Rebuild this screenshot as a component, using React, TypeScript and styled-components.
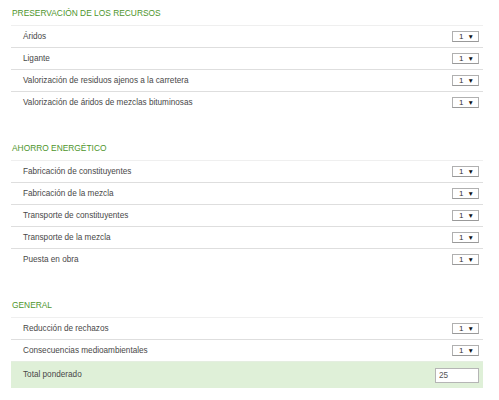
import styled, { createGlobalStyle } from "styled-components";

const GlobalStyle = createGlobalStyle`
  html, body {
    margin: 0;
    padding: 0;
    background: #fff;
  }
  body {
    font-family: "Liberation Sans", Arial, sans-serif;
    color: #444;
  }
`;

interface Criterio {
  nombre: string;
  valor: number;
}

interface Seccion {
  titulo: string;
  criterios: Criterio[];
}

const secciones: Seccion[] = [
  {
    titulo: "PRESERVACIÓN DE LOS RECURSOS",
    criterios: [
      { nombre: "Áridos", valor: 1 },
      { nombre: "Ligante", valor: 1 },
      { nombre: "Valorización de residuos ajenos a la carretera", valor: 1 },
      { nombre: "Valorización de áridos de mezclas bituminosas", valor: 1 },
    ],
  },
  {
    titulo: "AHORRO ENERGÉTICO",
    criterios: [
      { nombre: "Fabricación de constituyentes", valor: 1 },
      { nombre: "Fabricación de la mezcla", valor: 1 },
      { nombre: "Transporte de constituyentes", valor: 1 },
      { nombre: "Transporte de la mezcla", valor: 1 },
      { nombre: "Puesta en obra", valor: 1 },
    ],
  },
  {
    titulo: "GENERAL",
    criterios: [
      { nombre: "Reducción de rechazos", valor: 1 },
      { nombre: "Consecuencias medioambientales", valor: 1 },
    ],
  },
];

export default function App() {
  return (
    <>
      <GlobalStyle />
      <Pagina>
        {secciones.map((s, i) => (
          <Bloque key={s.titulo}>
            <Titulo>{s.titulo}</Titulo>
            <Tabla>
              {s.criterios.map((c) => (
                <Fila key={c.nombre}>
                  <Nombre>{c.nombre}</Nombre>
                  <Selector>
                    <select defaultValue={c.valor}>
                      {[1, 2, 3, 4, 5].map((n) => (
                        <option key={n} value={n}>
                          {n}
                        </option>
                      ))}
                    </select>
                    <Flecha>▼</Flecha>
                  </Selector>
                </Fila>
              ))}
              {i === secciones.length - 1 && (
                <FilaTotal>
                  <Nombre>Total ponderado</Nombre>
                  <Total type="text" defaultValue="25" />
                </FilaTotal>
              )}
            </Tabla>
          </Bloque>
        ))}
      </Pagina>
    </>
  );
}

const Pagina = styled.div`
  width: 472px;
  margin-left: 11px;
  padding-top: 5px;
  display: flex;
  flex-direction: column;
  gap: 27px;
`;

const Bloque = styled.section`
  display: flex;
  flex-direction: column;
`;

const Titulo = styled.h2`
  margin: 0 0 4px 1px;
  font-size: 8.4px;
  line-height: 16px;
  font-weight: normal;
  color: #4e952c;
`;

const Tabla = styled.div`
  display: flex;
  flex-direction: column;
`;

const Fila = styled.div`
  height: 21px;
  border-top: 1px solid #dedede;
  display: flex;
  align-items: center;
  justify-content: space-between;
  padding: 0 4px 0 12px;
  font-size: 8.2px;

  &:first-child {
    border-top-color: #efefef;
  }
`;

const FilaTotal = styled(Fila)`
  height: 26px;
  background: #dff0d8;
  border-top-color: #e4eee0;
`;

const Nombre = styled.span`
  color: #484848;
  margin-top: -1px;
`;

const Selector = styled.label`
  position: relative;
  width: 27px;
  height: 11px;
  display: block;

  select {
    appearance: none;
    width: 100%;
    height: 100%;
    margin: 0;
    padding: 0 0 0 6px;
    box-sizing: border-box;
    border: 1px solid #b0b0b0;
    border-bottom-color: #999;
    border-radius: 0;
    background: #fff;
    font-family: inherit;
    font-size: 8px;
    line-height: 9px;
    color: #333;
  }
`;

const Flecha = styled.span`
  position: absolute;
  right: 5px;
  top: 2px;
  font-size: 6.5px;
  line-height: 7px;
  color: #111;
  pointer-events: none;
`;

const Total = styled.input`
  width: 44px;
  height: 15px;
  box-sizing: border-box;
  margin: 0;
  padding: 0 0 0 3px;
  border: 1px solid #b5b5b5;
  border-radius: 0;
  background: #fff;
  font-family: inherit;
  font-size: 8.2px;
  color: #555;
`;
